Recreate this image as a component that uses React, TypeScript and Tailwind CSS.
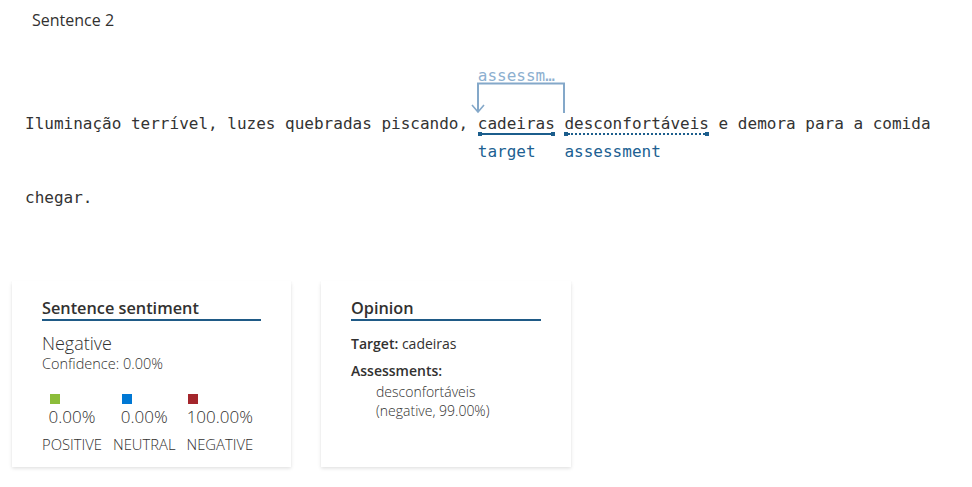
import React from 'react';

const mono = "font-['DejaVu_Sans_Mono','Liberation_Mono',monospace]";
const sans = "font-['Open_Sans','Noto_Sans',sans-serif]";

interface ScoreProps {
  color: string;
  value: string;
  label: string;
}

const Score: React.FC<ScoreProps> = ({ color, value, label }) => {
  return (
    <div className="flex flex-col items-center">
      <div className="flex flex-col items-start">
        <div className={`w-[10px] h-[10px] ml-[1px] ${color}`}></div>
        <div className="text-[17px] leading-[24px] font-light text-[#323130] mt-[1px]">{value}</div>
      </div>
      <div className="text-[14.8px] leading-[20px] font-light text-[#323130] mt-[5px]">{label}</div>
    </div>
  );
};

interface MarkProps {
  word: string;
  label: string;
  dotted?: boolean;
  children?: React.ReactNode;
}

// word with an underline and a role label below it
const Mark: React.FC<MarkProps> = ({ word, label, dotted, children }) => {
  return (
    <span className="relative inline-flex flex-col align-baseline">
      <span className="leading-[19px]">{word}</span>
      <span className="flex items-center h-[4px] mt-[-1px]">
        <span className="w-[4px] h-[4px] bg-[#1b5d8c]"></span>
        {dotted ? (
          <span className="flex-1 border-b-2 border-dotted border-[#1b5d8c]"></span>
        ) : (
          <span className="flex-1 h-[2px] bg-[#1b5d8c]"></span>
        )}
        <span className="w-[4px] h-[4px] bg-[#1b5d8c]"></span>
      </span>
      <span className="leading-[18px] mt-[7px] text-[#205f92]">{label}</span>
      {children}
    </span>
  );
};

const App: React.FC = () => {
  return (
    <div className="w-[972px] h-[487px] bg-white overflow-hidden">
      <div className={`${sans} text-[16px] leading-[20px] text-[#323130] pl-[32px] pt-[10px]`}>Sentence 2</div>

      {/* sentence with annotations */}
      <p className={`${mono} text-[16px] leading-[73px] text-[#333] ml-[25px] mt-[57px] w-[930px]`}>
        Iluminação terrível, luzes quebradas piscando,{' '}
        <Mark word="cadeiras" label="target">
          <svg className="absolute left-[-10px] top-[-32px]" width="100" height="34" viewBox="0 0 100 34">
            <path d="M10 30 V1.5 H96 V31" fill="none" stroke="#84a8c9" strokeWidth="2" />
            <path d="M4 23 L10 30 L16 23" fill="none" stroke="#84a8c9" strokeWidth="1.6" />
          </svg>
          <span className="absolute left-0 top-[-48px] leading-[20px] text-[#8db0d0] whitespace-nowrap">assessm…</span>
        </Mark>{' '}
        <Mark word="desconfortáveis" label="assessment" dotted />{' '}
        e demora para a comida chegar.
      </p>

      {/* cards */}
      <div className={`${sans} flex gap-[30px] ml-[12px] mt-[47px]`}>
        <div className="w-[279px] h-[186px] bg-white shadow-[0_1.6px_3.6px_rgba(0,0,0,0.13),0_0.3px_0.9px_rgba(0,0,0,0.11)] px-[30px] pt-[16px]">
          <div className="text-[16.3px] leading-[22px] font-semibold text-[#323130] border-b-2 border-[#1f5a86]">Sentence sentiment</div>
          <div className="text-[18px] leading-[24px] font-light text-[#323130] mt-[10px]">Negative</div>
          <div className="text-[14.5px] leading-[18px] font-light text-[#323130]">Confidence: 0.00%</div>
          <div className="flex gap-[11px] mt-[21px]">
            <Score color="bg-[#8cbd3a]" value="0.00%" label="POSITIVE" />
            <Score color="bg-[#0078d4]" value="0.00%" label="NEUTRAL" />
            <Score color="bg-[#a4262c]" value="100.00%" label="NEGATIVE" />
          </div>
        </div>

        <div className="w-[250px] h-[186px] bg-white shadow-[0_1.6px_3.6px_rgba(0,0,0,0.13),0_0.3px_0.9px_rgba(0,0,0,0.11)] px-[30px] pt-[16px]">
          <div className="text-[16.3px] leading-[22px] font-semibold text-[#323130] border-b-2 border-[#1f5a86]">Opinion</div>
          <div className="text-[14px] leading-[20px] text-[#323130] mt-[13px]">
            <span className="font-semibold">Target:</span> cadeiras
          </div>
          <div className="text-[14px] leading-[20px] font-semibold text-[#323130] mt-[7px]">Assessments:</div>
          <div className="text-[14px] leading-[19px] font-light text-[#323130] pl-[25px] pt-[1px]">
            desconfortáveis
            <br />
            (negative, 99.00%)
          </div>
        </div>
      </div>
    </div>
  );
};

export default App;
